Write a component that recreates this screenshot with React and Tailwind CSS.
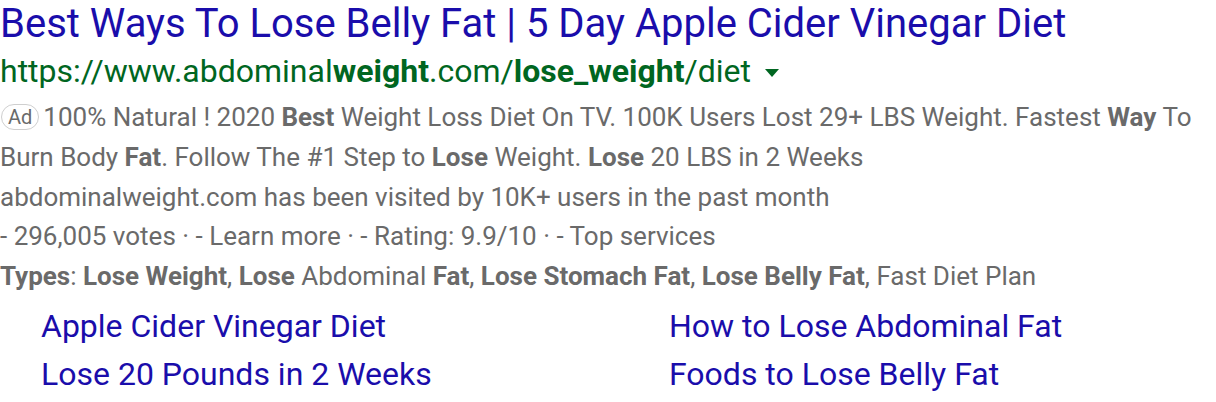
export default function App() {
  const sitelinks = [
    'Apple Cider Vinegar Diet',
    'How to Lose Abdominal Fat',
    'Lose 20 Pounds in 2 Weeks',
    'Foods to Lose Belly Fat',
  ];

  return (
    <div className="w-[1216px] h-[402px] bg-white overflow-hidden font-['Roboto',Arial,sans-serif]">
      <div className="text-[40px] leading-[47px] text-[#1a0dab] whitespace-nowrap">
        Best Ways To Lose Belly Fat | 5 Day Apple Cider Vinegar Diet
      </div>
      <div className="flex items-center text-[32px] leading-[48px] text-[#006621] whitespace-nowrap">
        <span>
          https://www.abdominal<b>weight</b>.com/<b>lose_weight</b>/diet
        </span>
        <svg width="14" height="8" viewBox="0 0 14 8" className="ml-[14px] mt-[4px]">
          <path d="M0 0 L14 0 L7 8 Z" fill="#006621" />
        </svg>
      </div>
      <div className="mt-[3px] text-[26px] leading-[39.8px] text-[#6a6a6a]">
        <div className="whitespace-nowrap">
          <span className="inline-block rounded-full border border-[#cfcfcf] px-[6px] text-[20px] leading-[24px] ml-[1px] mr-[4px] align-[2px]">
            Ad
          </span>
          100% Natural ! 2020 <b>Best</b> Weight Loss Diet On TV. 100K Users Lost 29+ LBS Weight. Fastest <b>Way</b> To
        </div>
        <div className="whitespace-nowrap">
          Burn Body <b>Fat</b>. Follow The #1 Step to <b>Lose</b> Weight. <b>Lose</b> 20 LBS in 2 Weeks
        </div>
        <div className="whitespace-nowrap">abdominalweight.com has been visited by 10K+ users in the past month</div>
        <div className="whitespace-nowrap">- 296,005 votes · - Learn more · - Rating: 9.9/10 · - Top services</div>
        <div className="whitespace-nowrap">
          <b>Types</b>: <b>Lose Weight</b>, <b>Lose</b> Abdominal <b>Fat</b>, <b>Lose Stomach Fat</b>,{' '}
          <b>Lose Belly Fat</b>, Fast Diet Plan
        </div>
      </div>
      <div className="grid grid-cols-[628px_1fr] pl-[41px] mt-[5px] text-[32px] leading-[48px] text-[#1a0dab]">
        {sitelinks.map((s) => (
          <div key={s} className="whitespace-nowrap">
            {s}
          </div>
        ))}
      </div>
    </div>
  );
}
